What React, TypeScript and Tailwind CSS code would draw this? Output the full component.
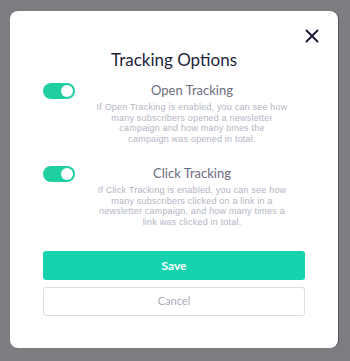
import React, { useState } from "react";

function Toggle({ on, onClick }: { on: boolean; onClick: () => void }) {
  return (
    <button
      type="button"
      onClick={onClick}
      className={`relative mt-[1px] h-[16px] w-[32px] shrink-0 rounded-full ${on ? "bg-[#20cfa0]" : "bg-[#d5d6de]"}`}
    >
      <span
        className={`absolute top-[2px] h-[12px] w-[12px] rounded-full bg-white ${on ? "left-[18px]" : "left-[2px]"}`}
      />
    </button>
  );
}

const options = [
  {
    title: "Open Tracking",
    lines: [
      "If Open Tracking is enabled, you can see how",
      "many subscribers opened a newsletter",
      "campaign and how many times the",
      "campaign was opened in total.",
    ],
  },
  {
    title: "Click Tracking",
    lines: [
      "If Click Tracking is enabled, you can see how",
      "many subscribers clicked on a link in a",
      "newsletter campaign, and how many times a",
      "link was clicked in total.",
    ],
  },
];

export default function App() {
  const [state, setState] = useState([true, true]);

  return (
    <div
      className="h-[361px] w-[350px] bg-[#7c7d81] pl-[10px] pt-[11px]"
      style={{ fontFamily: "Lato, 'Noto Sans', sans-serif" }}
    >
      <div className="relative h-[337px] w-[328px] rounded-[8px] bg-white px-[33px] pt-[37px] shadow-[1px_0_0_#55565a]">
        <button type="button" className="absolute right-[19px] top-[18px] text-[#1b1b3a]">
          <svg width="14" height="14" viewBox="0 0 14 14" fill="none">
            <path d="M1.5 1.5L12.5 12.5M12.5 1.5L1.5 12.5" stroke="currentColor" strokeWidth="2" strokeLinecap="round" />
          </svg>
        </button>

        <h2 className="text-center text-[17px] leading-[24px] text-[#1f1f3d]">Tracking Options</h2>

        <div className="mt-[10px] flex flex-col gap-[21px]">
          {options.map((o, i) => (
            <div key={o.title} className="flex items-start">
              <Toggle
                on={state[i]}
                onClick={() => setState((s) => s.map((v, j) => (j === i ? !v : v)))}
              />
              <div className="ml-[12px] w-[210px] text-center">
                <div className="text-[13px] leading-[16px] text-[#6b6c7e]">{o.title}</div>
                <p
                  className="mt-[4px] whitespace-nowrap text-[9px] leading-[10.5px] tracking-[0.2px] text-[#b3b4c4]"
                  style={{ fontFamily: "'Liberation Sans', Arial, sans-serif" }}
                >
                  {o.lines.map((l) => (
                    <span key={l} className="block">
                      {l}
                    </span>
                  ))}
                </p>
              </div>
            </div>
          ))}
        </div>

        <div className="mt-[24px] flex flex-col gap-[7px]">
          <button
            type="button"
            className="h-[29px] w-full rounded-[3px] bg-[#14d3ae] text-[12px] font-bold text-white"
          >
            Save
          </button>
          <button
            type="button"
            className="h-[29px] w-full rounded-[3px] border border-[#dcdde5] bg-white text-[11px] text-[#a9aabb]"
          >
            Cancel
          </button>
        </div>
      </div>
    </div>
  );
}
